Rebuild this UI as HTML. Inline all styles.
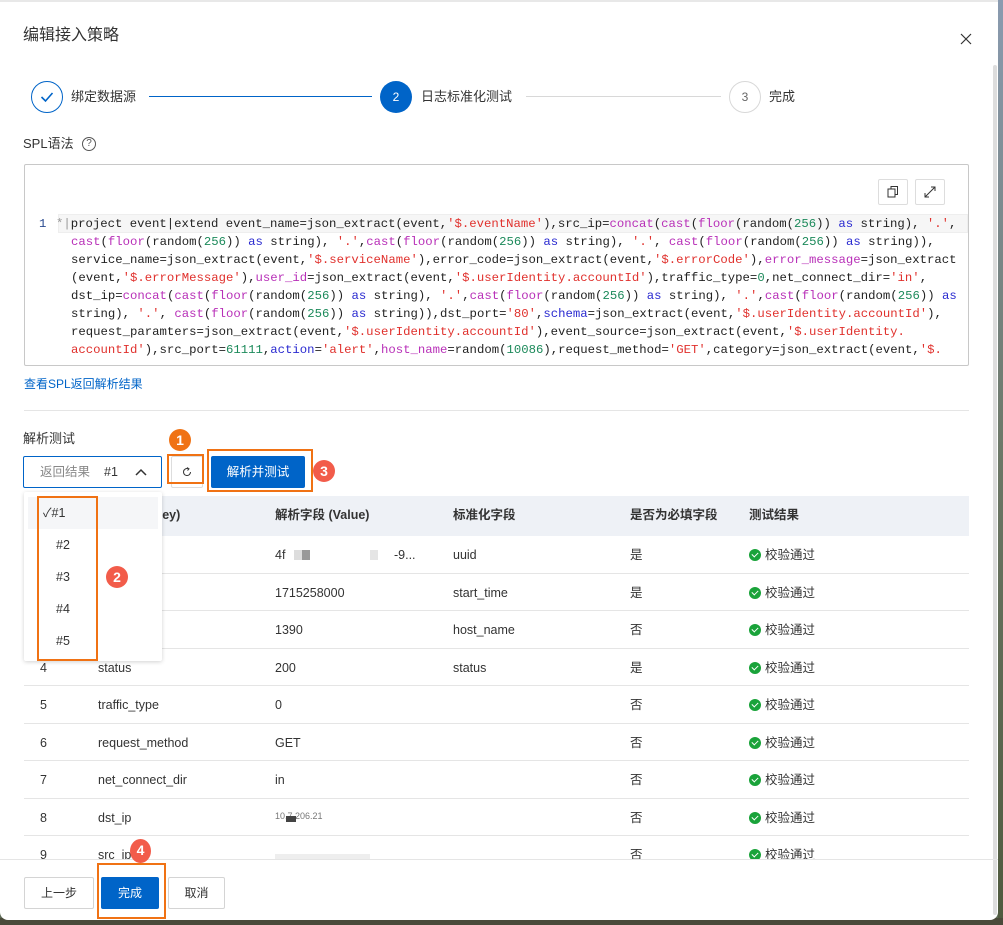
<!DOCTYPE html>
<html><head><meta charset="utf-8"><style>
*{margin:0;padding:0;box-sizing:border-box}
body{width:1003px;height:925px;overflow:hidden;background:#5d6a55;font-family:"Liberation Sans","Noto Sans CJK SC",sans-serif;font-size:12px;line-height:16px;color:#333;position:relative}
.bg{position:absolute;left:998px;top:0;width:5px;height:925px;background:linear-gradient(#8a9bb0,#6c7766 50%,#4f5a3e)}
.bgb{position:absolute;left:0;top:918px;width:1003px;height:7px;background:#4a4a3a}
.modal{position:absolute;left:0;top:0;width:998px;height:920px;background:#fff;border-radius:0 0 8px 8px;border-top:2px solid #e8e8e8}
.abs{position:absolute}
.sb{position:absolute;left:993px;top:63px;width:4px;height:850px;background:#ddd;border-radius:2px}
.code{position:absolute;left:24px;top:162px;width:945px;height:202px;border:1px solid #c8c8c8;border-radius:2px;overflow:hidden}
.cl{position:absolute;left:46px;font-family:"Liberation Mono",monospace;font-size:12.3px;color:#222;white-space:pre;line-height:18px}
.f{color:#b830b8}.s{color:#e0302c}.n{color:#1d8a5b}.k{color:#2a2ad0}
.row{position:absolute;left:24px;width:945px;height:38px;border-bottom:1px solid #e5e5e5;font-size:12.5px;color:#333}
.row span{position:absolute;top:11px;line-height:16px}
.ok{display:inline-block;width:12px;height:12px;border-radius:50%;background:#1aa33a;vertical-align:-2px;margin-right:4px;position:relative}
.ok:after{content:"";position:absolute;left:3px;top:2.5px;width:5px;height:3px;border-left:1.5px solid #fff;border-bottom:1.5px solid #fff;transform:rotate(-45deg)}
.badge{position:absolute;width:22px;height:22px;border-radius:50%;color:#fff;font-weight:bold;font-size:14px;text-align:center;line-height:22px}
.obox{position:absolute;border:2px solid #f07214}
.btn{position:absolute;height:32px;border:1px solid #d4d4d4;border-radius:2px;background:#fff;text-align:center;line-height:30px;font-size:12px;color:#333}
</style></head><body>
<div class="bg"></div><div class="bgb"></div>
<div class="modal">
<div class="sb"></div>
<div class="abs" style="left:23px;top:26px;font-size:16px;color:#333">编辑接入策略</div>
<svg class="abs" style="left:960px;top:31px" width="12" height="12"><path d="M1 1L11 11M11 1L1 11" stroke="#333" stroke-width="1.2"/></svg>
<div class="abs" style="left:31px;top:79px;width:32px;height:32px;border:1px solid #0064c8;border-radius:50%"></div>
<svg class="abs" style="left:40px;top:89px" width="14" height="12"><path d="M1.5 6L5.5 10L12.5 2" stroke="#0064c8" stroke-width="1.6" fill="none"/></svg>
<div class="abs" style="left:71px;top:87px;font-size:13px">绑定数据源</div>
<div class="abs" style="left:149px;top:94px;width:223px;height:1px;background:#0064c8"></div>
<div class="abs" style="left:380px;top:79px;width:32px;height:32px;background:#0064c8;border-radius:50%;color:#fff;text-align:center;line-height:32px;font-size:12px">2</div>
<div class="abs" style="left:421px;top:87px;font-size:13px">日志标准化测试</div>
<div class="abs" style="left:526px;top:94px;width:195px;height:1px;background:#d8d8d8"></div>
<div class="abs" style="left:729px;top:79px;width:32px;height:32px;border:1px solid #d8d8d8;border-radius:50%;color:#666;text-align:center;line-height:30px;font-size:12px">3</div>
<div class="abs" style="left:769px;top:87px;font-size:13px">完成</div>
<div class="abs" style="left:23px;top:134px;font-size:13px">SPL语法</div>
<div class="abs" style="left:82px;top:135px;width:14px;height:14px;border:1px solid #555;border-radius:50%;font-size:10px;text-align:center;line-height:12px;color:#555">?</div>
<div class="code">
<div class="abs" style="left:853px;top:14px;width:30px;height:26px;border:1px solid #ddd;border-radius:2px"></div>
<svg class="abs" style="left:862px;top:20px" width="12" height="14"><rect x="1" y="4" width="7" height="8" fill="none" stroke="#333"/><path d="M4 4V1.5H10.5V9.5H8" fill="none" stroke="#333"/></svg>
<div class="abs" style="left:890px;top:14px;width:30px;height:26px;border:1px solid #ddd;border-radius:2px"></div>
<svg class="abs" style="left:899px;top:20px" width="12" height="14"><path d="M1 12L11 2M7 2H11V6M1 8V12H5" fill="none" stroke="#333"/></svg>
<div class="abs" style="left:33px;top:49px;width:910px;height:19px;background:#f6f6f6;border:1px solid #eee"></div>
<div class="cl" style="left:14px;top:50px;color:#2a4a90">1</div>
<div class="cl" style="top:50px;left:31px;color:#999">*|<span style="color:#222">project event|extend event_name=json_extract(event,<span class="s">'$.eventName'</span>),src_ip=<span class="f">concat</span>(<span class="f">cast</span>(<span class="f">floor</span>(random(<span class="n">256</span>)) <span class="k">as</span> string), <span class="s">'.'</span>,</span></div>
<div class="cl" style="top:68px"><span class="f">cast</span>(<span class="f">floor</span>(random(<span class="n">256</span>)) <span class="k">as</span> string), <span class="s">'.'</span>,<span class="f">cast</span>(<span class="f">floor</span>(random(<span class="n">256</span>)) <span class="k">as</span> string), <span class="s">'.'</span>, <span class="f">cast</span>(<span class="f">floor</span>(random(<span class="n">256</span>)) <span class="k">as</span> string)),</div>
<div class="cl" style="top:86px">service_name=json_extract(event,<span class="s">'$.serviceName'</span>),error_code=json_extract(event,<span class="s">'$.errorCode'</span>),<span class="f">error_message</span>=json_extract</div>
<div class="cl" style="top:104px">(event,<span class="s">'$.errorMessage'</span>),<span class="f">user_id</span>=json_extract(event,<span class="s">'$.userIdentity.accountId'</span>),traffic_type=<span class="n">0</span>,net_connect_dir=<span class="s">'in'</span>,</div>
<div class="cl" style="top:122px">dst_ip=<span class="f">concat</span>(<span class="f">cast</span>(<span class="f">floor</span>(random(<span class="n">256</span>)) <span class="k">as</span> string), <span class="s">'.'</span>,<span class="f">cast</span>(<span class="f">floor</span>(random(<span class="n">256</span>)) <span class="k">as</span> string), <span class="s">'.'</span>,<span class="f">cast</span>(<span class="f">floor</span>(random(<span class="n">256</span>)) <span class="k">as</span></div>
<div class="cl" style="top:140px">string), <span class="s">'.'</span>, <span class="f">cast</span>(<span class="f">floor</span>(random(<span class="n">256</span>)) <span class="k">as</span> string)),dst_port=<span class="s">'80'</span>,<span class="k">schema</span>=json_extract(event,<span class="s">'$.userIdentity.accountId'</span>),</div>
<div class="cl" style="top:158px">request_paramters=json_extract(event,<span class="s">'$.userIdentity.accountId'</span>),event_source=json_extract(event,<span class="s">'$.userIdentity.</span></div>
<div class="cl" style="top:176px"><span class="s">accountId'</span>),src_port=<span class="n">61111</span>,<span class="k">action</span>=<span class="s">'alert'</span>,<span class="f">host_name</span>=random(<span class="n">10086</span>),request_method=<span class="s">'GET'</span>,category=json_extract(event,<span class="s">'$.</span></div>
</div>
<div class="abs" style="left:24px;top:374px;font-size:12px;color:#0064c8">查看SPL返回解析结果</div>
<div class="abs" style="left:24px;top:408px;width:945px;height:1px;background:#e5e5e5"></div>
<div class="abs" style="left:23px;top:429px;font-size:13px">解析测试</div>
<div class="abs" style="left:23px;top:454px;width:139px;height:32px;border:1px solid #0064c8;border-radius:2px"></div>
<div class="abs" style="left:40px;top:462px;font-size:12.5px;color:#888">返回结果</div>
<div class="abs" style="left:104px;top:462px;font-size:12.5px">#1</div>
<svg class="abs" style="left:134px;top:465px" width="14" height="10"><path d="M2 8L7 3L12 8" fill="none" stroke="#333" stroke-width="1.5"/></svg>
<div class="abs" style="left:171px;top:454px;width:32px;height:32px;border:1px solid #ddd;border-radius:2px"></div>
<svg class="abs" style="left:182px;top:465px" width="10" height="10"><path d="M8.5 5A3.5 3.5 0 1 1 6 1.7" fill="none" stroke="#333"/><path d="M5 0.5L7 1.8L5.5 3.5" fill="none" stroke="#333"/></svg>
<div class="obox" style="left:167px;top:452px;width:37px;height:30px"></div>
<div class="badge" style="left:169px;top:427px;background:#f07214">1</div>
<div class="abs" style="left:211px;top:454px;width:94px;height:32px;background:#0064c8;border-radius:2px;color:#fff;text-align:center;line-height:32px;font-size:12.5px">解析并测试</div>
<div class="obox" style="left:207px;top:447px;width:106px;height:43px"></div>
<div class="badge" style="left:313px;top:458px;background:#f25c4a">3</div>
<div class="abs" style="left:24px;top:494px;width:945px;height:40px;background:#eef1f6"></div>
<div class="abs" style="left:24px;top:505px;font-size:12.5px;font-weight:bold;color:#333;width:945px">
<span class="abs" style="left:125px">(Key)</span><span class="abs" style="left:251px">解析字段 (Value)</span><span class="abs" style="left:429px">标准化字段</span><span class="abs" style="left:606px">是否为必填字段</span><span class="abs" style="left:725px">测试结果</span></div>
<div class="row" style="top:534px"><span style="left:251px">4f</span><span style="left:270px;width:8px;height:10px;background:#ddd;top:14px"></span><span style="left:278px;width:8px;height:10px;background:#999;top:14px"></span><span style="left:346px;width:8px;height:10px;background:#e5e5e5;top:14px"></span><span style="left:370px">-9...</span><span style="left:429px">uuid</span><span style="left:606px">是</span><span style="left:725px"><i class="ok"></i>校验通过</span></div>
<div class="row" style="top:572px;height:37px"><span style="left:251px">1715258000</span><span style="left:429px">start_time</span><span style="left:606px">是</span><span style="left:725px"><i class="ok"></i>校验通过</span></div>
<div class="row" style="top:609px"><span style="left:251px">1390</span><span style="left:429px">host_name</span><span style="left:606px">否</span><span style="left:725px"><i class="ok"></i>校验通过</span></div>
<div class="row" style="top:647px;height:37px"><span style="left:16px">4</span><span style="left:74px">status</span><span style="left:251px">200</span><span style="left:429px">status</span><span style="left:606px">是</span><span style="left:725px"><i class="ok"></i>校验通过</span></div>
<div class="row" style="top:684px"><span style="left:16px">5</span><span style="left:74px">traffic_type</span><span style="left:251px">0</span><span style="left:606px">否</span><span style="left:725px"><i class="ok"></i>校验通过</span></div>
<div class="row" style="top:722px;height:37px"><span style="left:16px">6</span><span style="left:74px">request_method</span><span style="left:251px">GET</span><span style="left:606px">否</span><span style="left:725px"><i class="ok"></i>校验通过</span></div>
<div class="row" style="top:759px"><span style="left:16px">7</span><span style="left:74px">net_connect_dir</span><span style="left:251px">in</span><span style="left:606px">否</span><span style="left:725px"><i class="ok"></i>校验通过</span></div>
<div class="row" style="top:797px;height:37px"><span style="left:16px">8</span><span style="left:74px">dst_ip</span><span style="left:251px;font-size:9px;color:#777;top:9px">10.7.206.21</span><span style="left:262px;width:10px;height:6px;background:#444;top:17px"></span><span style="left:606px">否</span><span style="left:725px"><i class="ok"></i>校验通过</span></div>
<div class="row" style="top:834px;border:none;overflow:hidden;height:23px"><span style="left:16px">9</span><span style="left:74px">src_ip</span><span style="left:251px;width:95px;height:6px;background:#eee;top:18px"></span><span style="left:606px">否</span><span style="left:725px"><i class="ok"></i>校验通过</span></div>
<div class="abs" style="left:24px;top:490px;width:138px;height:169px;background:#fff;box-shadow:0 1px 4px rgba(0,0,0,.18);border-radius:2px"></div>
<div class="abs" style="left:28px;top:495px;width:130px;height:32px;background:#f5f6f8"></div>
<div class="abs" style="left:43px;top:503px;font-size:12.5px">✓#1</div>
<div class="abs" style="left:56px;top:535px;font-size:12.5px">#2</div>
<div class="abs" style="left:56px;top:567px;font-size:12.5px">#3</div>
<div class="abs" style="left:56px;top:599px;font-size:12.5px">#4</div>
<div class="abs" style="left:56px;top:631px;font-size:12.5px">#5</div>
<div class="obox" style="left:37px;top:494px;width:61px;height:165px"></div>
<div class="badge" style="left:106px;top:564px;background:#f25c4a">2</div>
<div class="abs" style="left:0;top:857px;width:998px;height:1px;background:#e5e5e5"></div>
<div class="btn" style="left:24px;top:875px;width:70px">上一步</div>
<div class="abs" style="left:101px;top:875px;width:58px;height:32px;background:#0064c8;border-radius:2px;color:#fff;text-align:center;line-height:32px">完成</div>
<div class="btn" style="left:168px;top:875px;width:57px">取消</div>
<div class="obox" style="left:97px;top:861px;width:69px;height:56px"></div>
<div class="badge" style="left:130px;top:837px;background:#f25c4a;width:21px;height:24px;border-radius:50%">4</div>
</div>
</body></html>
